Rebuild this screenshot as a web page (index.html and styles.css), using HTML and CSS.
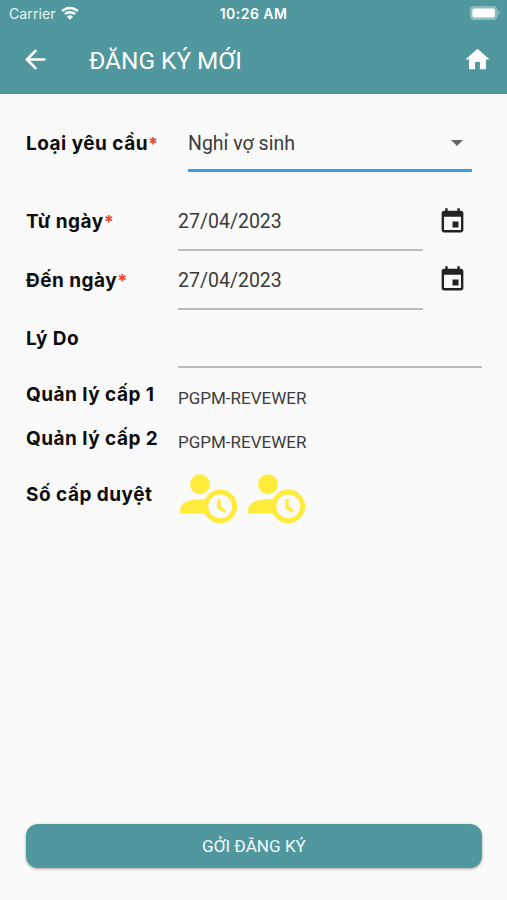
FILE: index.html
```html
<!DOCTYPE html>
<html lang="vi">
<head>
    <meta charset="UTF-8">
    <meta name="viewport" content="width=device-width, initial-scale=1.0">
    <title>Đăng ký mới</title>
    <link rel="stylesheet" href="styles.css">
</head>

<body>
    <div class="app">
        <header class="header">
            <div class="status-bar">
                <div class="carrier">
                    <span>Carrier</span>
                    <svg class="wifi" viewBox="0 0 18 14">
                        <path d="M1.2 5.2a11.2 11.2 0 0 1 15.6 0M4 8.2a7.2 7.2 0 0 1 10 0" fill="none" stroke="currentColor" stroke-width="2.5"/>
                        <path d="M9 13.8l-3-3.1a4.3 4.3 0 0 1 6 0z" fill="currentColor"/>
                    </svg>
                </div>
                <div class="time">10:26 AM</div>
                <svg class="battery" viewBox="0 0 30 14">
                    <rect x="0" y="0" width="27.4" height="14" rx="4" fill="#fff" fill-opacity="0.35"/>
                    <rect x="2.4" y="2.4" width="22.4" height="9.2" rx="2" fill="#fff"/>
                    <path d="M28.2 4.8c1.8.8 1.8 3.6 0 4.4z" fill="#fff" fill-opacity="0.45"/>
                </svg>
            </div>
            <div class="app-bar">
                <svg class="icon back" viewBox="0 0 24 24">
                    <path d="M19.2 12H5M12 4.9L4.9 12l7.1 7.1" fill="none" stroke="currentColor" stroke-width="2.2" stroke-linecap="round" stroke-linejoin="round"/>
                </svg>
                <h1 class="title">ĐĂNG KÝ MỚI</h1>
                <svg class="icon home" viewBox="0 0 24 24">
                    <path d="M10 20v-6h4v6h5v-8h3L12 3 2 12h3v8z" fill="currentColor"/>
                </svg>
            </div>
        </header>

        <main class="form">
            <div class="row row-type">
                <div class="label">Loại yêu cầu<span class="required">*</span></div>
                <div class="select">
                    <span>Nghỉ vợ sinh</span>
                    <svg class="caret" viewBox="0 0 12 6"><path d="M0 0h12L6 6z" fill="currentColor"/></svg>
                </div>
            </div>
            <div class="row">
                <div class="label">Từ ngày<span class="required">*</span></div>
                <div class="input">27/04/2023</div>
                <svg class="icon calendar" viewBox="0 0 24 24">
                    <path d="M17 12h-5v5h5v-5zM16 1v2H8V1H6v2H5c-1.11 0-1.99.9-1.99 2L3 19c0 1.1.89 2 2 2h14c1.1 0 2-.9 2-2V5c0-1.1-.9-2-2-2h-1V1h-2zm3 18H5V8h14v11z" fill="currentColor"/>
                </svg>
            </div>
            <div class="row">
                <div class="label">Đến ngày<span class="required">*</span></div>
                <div class="input">27/04/2023</div>
                <svg class="icon calendar" viewBox="0 0 24 24">
                    <path d="M17 12h-5v5h5v-5zM16 1v2H8V1H6v2H5c-1.11 0-1.99.9-1.99 2L3 19c0 1.1.89 2 2 2h14c1.1 0 2-.9 2-2V5c0-1.1-.9-2-2-2h-1V1h-2zm3 18H5V8h14v11z" fill="currentColor"/>
                </svg>
            </div>
            <div class="row">
                <div class="label">Lý Do</div>
                <div class="input"></div>
            </div>
            <div class="row row-manager">
                <div class="label">Quản lý cấp 1</div>
                <div class="value">PGPM-REVEWER</div>
            </div>
            <div class="row row-manager">
                <div class="label">Quản lý cấp 2</div>
                <div class="value">PGPM-REVEWER</div>
            </div>
            <div class="row row-levels">
                <div class="label">Số cấp duyệt</div>
                <div class="levels">
                    <svg class="user-clock" viewBox="0 0 58 50">
                        <circle cx="21" cy="10.3" r="10"/>
                        <path d="M1.2 39.4v-4.2c0-6 9-9.9 19.5-9.9h7v14.1z"/>
                        <circle class="clock" cx="41.2" cy="32.4" r="14.4"/>
                        <path class="hands" d="M39.9 25.3v8.2l6.4 3.8"/>
                    </svg>
                    <svg class="user-clock" viewBox="0 0 58 50">
                        <circle cx="21" cy="10.3" r="10"/>
                        <path d="M1.2 39.4v-4.2c0-6 9-9.9 19.5-9.9h7v14.1z"/>
                        <circle class="clock" cx="41.2" cy="32.4" r="14.4"/>
                        <path class="hands" d="M39.9 25.3v8.2l6.4 3.8"/>
                    </svg>
                </div>
            </div>
        </main>

        <footer class="footer">
            <button class="submit">GỞI ĐĂNG KÝ</button>
        </footer>
    </div>
</body>
</html>
```
FILE: styles.css
```css
* {
  box-sizing: border-box;
}

body {
  margin: 0;
  background-color: #fafafa;
  font-family: Roboto, sans-serif;
  color: #3b3b3b;
}

.app {
  display: flex;
  flex-direction: column;
  height: 900px;
}

.header {
  height: 94px;
  background-color: #50989e;
  color: #fff;
}

.status-bar {
  display: grid;
  grid-template-columns: 1fr auto 1fr;
  align-items: center;
  height: 27px;
  padding: 0 7px 0 9px;
  font-family: Inter, sans-serif;
  font-size: 14px;
}

.carrier {
  display: flex;
  align-items: center;
  gap: 5px;
  color: #e6f3f3;
  letter-spacing: 0.1px;
}

.wifi {
  width: 18px;
  height: 14px;
  margin-bottom: 2px;
  color: #fff;
}

.time {
  margin-right: 2px;
  font-size: 14px;
  font-weight: 600;
  letter-spacing: 0.45px;
}

.battery {
  width: 30px;
  height: 14px;
  margin-bottom: 1px;
  justify-self: end;
}

.app-bar {
  display: flex;
  align-items: center;
  height: 66px;
  padding: 0 15px 0 21px;
}

.icon {
  flex: none;
  width: 29px;
  height: 29px;
}

.back {
  margin-bottom: 1px;
}

.home {
  margin-bottom: 1px;
}

.title {
  flex: 1;
  margin: 1px 0 0 39px;
  font-size: 24.4px;
  font-weight: 400;
}

.form {
  flex: 1;
  padding: 22px 25px 0 26px;
}

.row {
  display: flex;
  align-items: center;
  height: 58.6px;
}

.label {
  flex: none;
  width: 152px;
  font-family: Inter, sans-serif;
  font-size: 19px;
  font-weight: 700;
  letter-spacing: 0.48px;
  color: #0c0c0c;
  white-space: nowrap;
}

.required {
  font-size: 18px;
  color: #f44336;
}

.row-type {
  height: 56px;
  margin-bottom: 20.4px;
}

.row-type .label {
  padding-bottom: 2px;
}

.select {
  display: flex;
  flex: 1;
  align-items: center;
  justify-content: space-between;
  height: 56px;
  margin: 0 10px;
  padding: 1px 9px 0 0;
  border-bottom: 3px solid #3c9cee;
  font-size: 19.5px;
}

.caret {
  width: 12px;
  height: 6px;
  color: #666;
}

.input {
  flex: 1;
  height: 100%;
  border-bottom: 2px solid #bdbdbd;
  font-size: 19.5px;
  line-height: 59px;
}

.calendar {
  margin: 0 15px 1px;
  color: #222;
}

.row-manager {
  height: 44px;
}

.row-manager:nth-child(5) {
  margin-top: 4px;
}

.value {
  padding-top: 8px;
  font-size: 17px;
}

.row-levels {
  height: 68px;
}

.levels {
  display: flex;
  gap: 10.5px;
  padding: 10px 0 0 0.8px;
}

.user-clock {
  width: 58px;
  height: 50px;
  fill: #ffeb3b;
}

.clock {
  fill: #fafafa;
  stroke: #ffeb3b;
  stroke-width: 5;
}

.hands {
  fill: none;
  stroke: #ffeb3b;
  stroke-width: 3.5;
}

.footer {
  padding: 0 25px 32px 26px;
}

.submit {
  display: block;
  width: 100%;
  height: 44px;
  border: none;
  border-radius: 12px;
  background-color: #50989e;
  box-shadow: 0 1px 3px rgba(0, 0, 0, 0.35);
  font-family: Roboto, sans-serif;
  font-size: 17.1px;
  color: #f2fbfb;
}
```
